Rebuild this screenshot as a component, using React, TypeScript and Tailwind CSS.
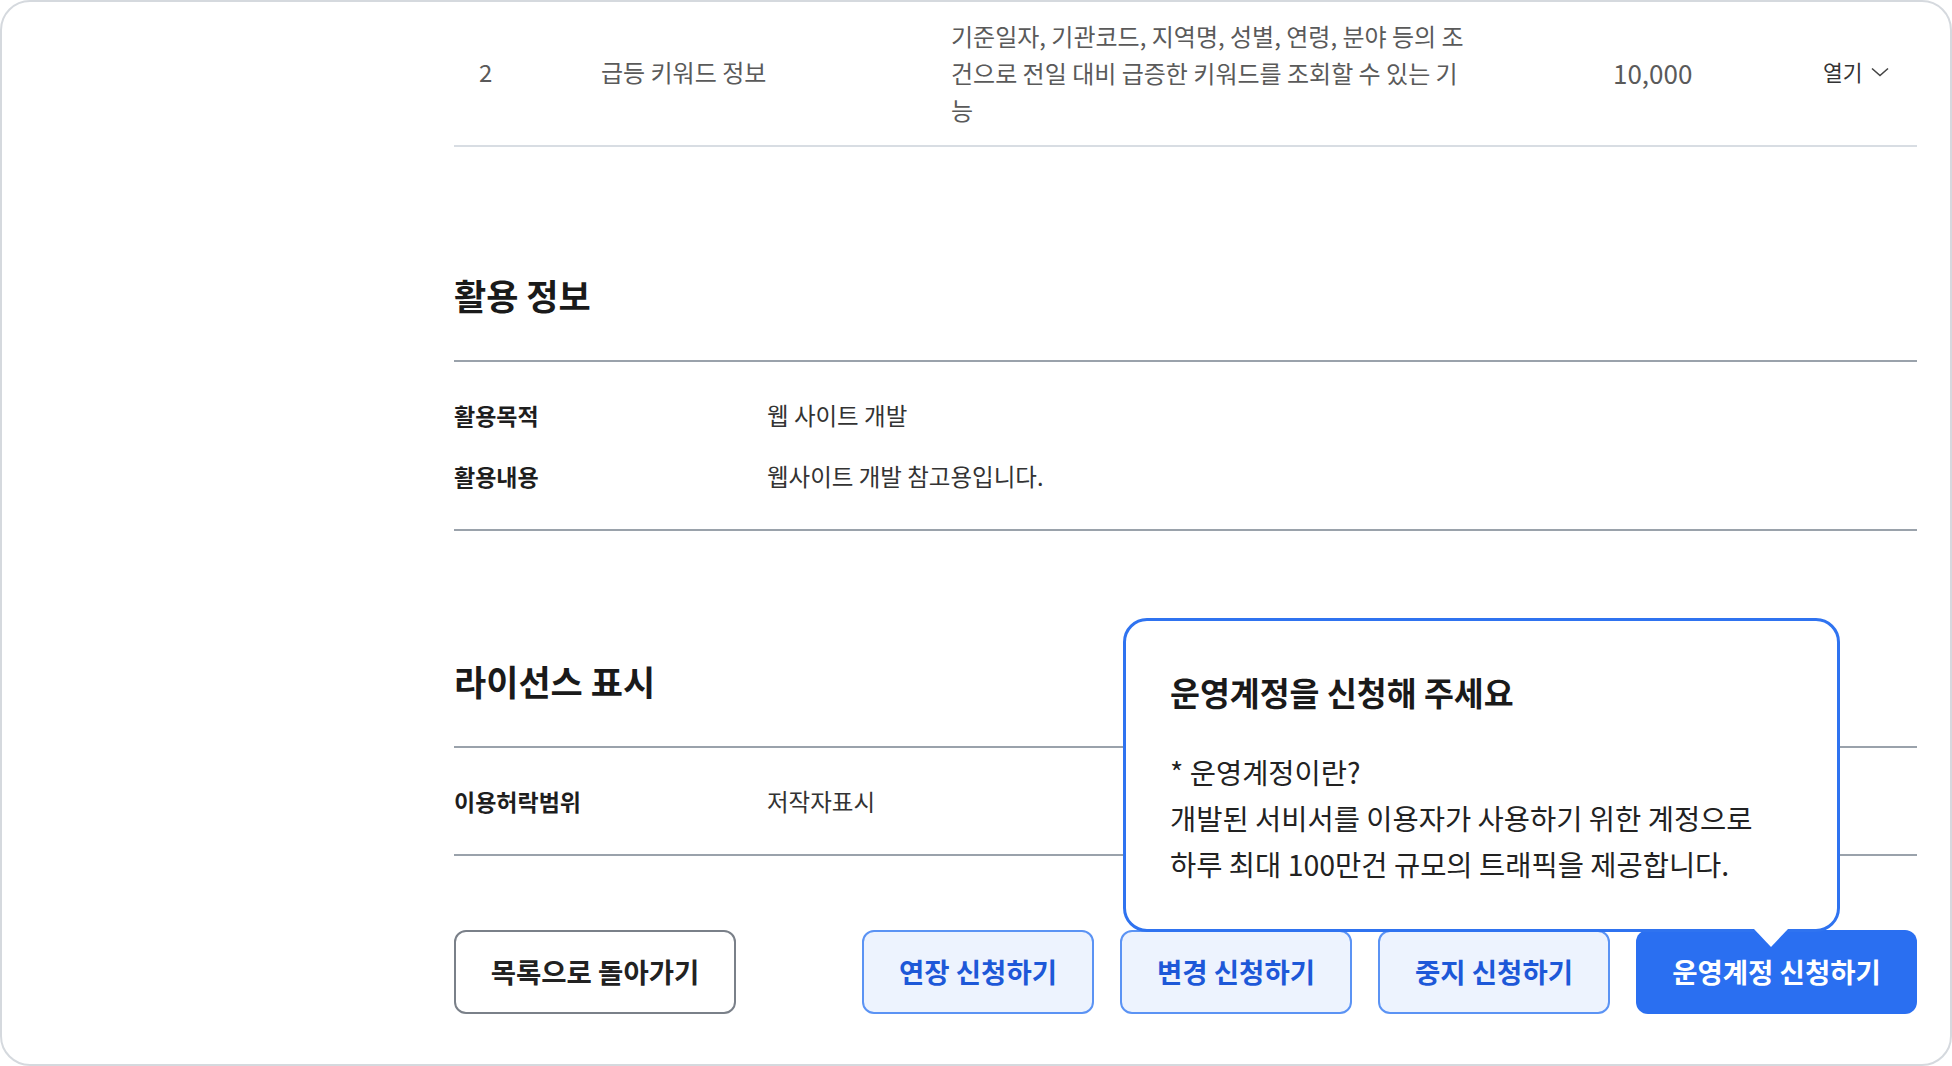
import React from "react";

const font = "font-[Noto_Sans_CJK_KR,sans-serif]";

const InfoRow = ({ label, value }: { label: string; value: string }) => (
  <div className="flex h-[61px] items-center">
    <div className="w-[313px] text-[23px] leading-[33px] font-bold text-[#1e1e1e]">{label}</div>
    <div className="text-[23.5px] leading-[33px] text-[#333]">{value}</div>
  </div>
);

const Section = ({
  title,
  rows,
  className,
}: {
  title: string;
  rows: { label: string; value: string }[];
  className: string;
}) => (
  <section className={className}>
    <h2 className="text-[35px] font-bold leading-[48px] text-[#1a1a1a]">{title}</h2>
    <div className="mt-[41px] border-y-2 border-[#9aa2ab] pt-[23px] pb-[22px]">
      {rows.map((r) => (
        <InfoRow key={r.label} label={r.label} value={r.value} />
      ))}
    </div>
  </section>
);

const lightBtn =
  "h-[84px] w-[232px] rounded-[12px] border-2 border-[#5b93f4] bg-[#edf3fe] text-[27.5px] font-semibold text-[#1d58d8]";

export default function App() {
  return (
    <div className={`${font} h-[1066px] w-[1952px] overflow-hidden rounded-[30px] border-2 border-[#d5d9de] bg-white`}>
      <div className="ml-[452px] w-[1463px]">
        {/* api row */}
        <div className="flex h-[145px] items-center border-b-2 border-[#d8dde3] pb-[3px] text-[#5a5a5a]">
          <div className="w-[147px] pl-[25px] text-[24px]">2</div>
          <div className="w-[350px] text-[24px]">급등 키워드 정보</div>
          <div className="w-[520px] text-[24px] leading-[37px]">
            기준일자, 기관코드, 지역명, 성별, 연령, 분야 등의 조<br />
            건으로 전일 대비 급증한 키워드를 조회할 수 있는 기<br />
            능
          </div>
          <div className="w-[352px] pl-[142px] text-[26px]">10,000</div>
          <button className="flex items-center gap-[8px] text-[21.5px] text-[#333]">
            열기
            <svg width="18" height="10" viewBox="0 0 18 10" fill="none">
              <polyline points="1,1.5 9,8.5 17,1.5" stroke="#444" strokeWidth="1.6" />
            </svg>
          </button>
        </div>

        <Section
          className="mt-[124px]"
          title="활용 정보"
          rows={[
            { label: "활용목적", value: "웹 사이트 개발" },
            { label: "활용내용", value: "웹사이트 개발 참고용입니다." },
          ]}
        />

        <Section
          className="mt-[126px]"
          title="라이선스 표시"
          rows={[{ label: "이용허락범위", value: "저작자표시" }]}
        />

        {/* actions */}
        <div className="mt-[74px] flex items-center justify-between">
          <button className="h-[84px] w-[282px] rounded-[12px] border-2 border-[#7a8089] bg-white text-[27.5px] font-semibold text-[#222]">
            목록으로 돌아가기
          </button>
          <div className="flex gap-[26px]">
            <button className={lightBtn}>연장 신청하기</button>
            <button className={lightBtn}>변경 신청하기</button>
            <button className={lightBtn}>중지 신청하기</button>
            <div className="relative">
              <button className="h-[84px] w-[281px] rounded-[12px] bg-[#2a6ff1] text-[27.5px] font-semibold text-white">
                운영계정 신청하기
              </button>
              <div className="absolute right-[77px] bottom-[82px] z-10 h-[314px] w-[717px] rounded-[24px] border-[3px] border-[#2f73f0] bg-white pt-[48px] pl-[44px]">
                <p className="text-[32.5px] font-bold leading-[45px] text-[#1a1a1a]">운영계정을 신청해 주세요</p>
                <div className="mt-[35px] text-[28.5px] leading-[46px] text-[#222]">
                  <p>* 운영계정이란?</p>
                  <p>개발된 서비서를 이용자가 사용하기 위한 계정으로</p>
                  <p>하루 최대 100만건 규모의 트래픽을 제공합니다.</p>
                </div>
                <svg className="absolute top-full right-[49px]" width="34" height="21" viewBox="0 0 34 21">
                  <polygon points="0,0 34,0 17,18" fill="white" />
                </svg>
              </div>
            </div>
          </div>
        </div>
      </div>
    </div>
  );
}
